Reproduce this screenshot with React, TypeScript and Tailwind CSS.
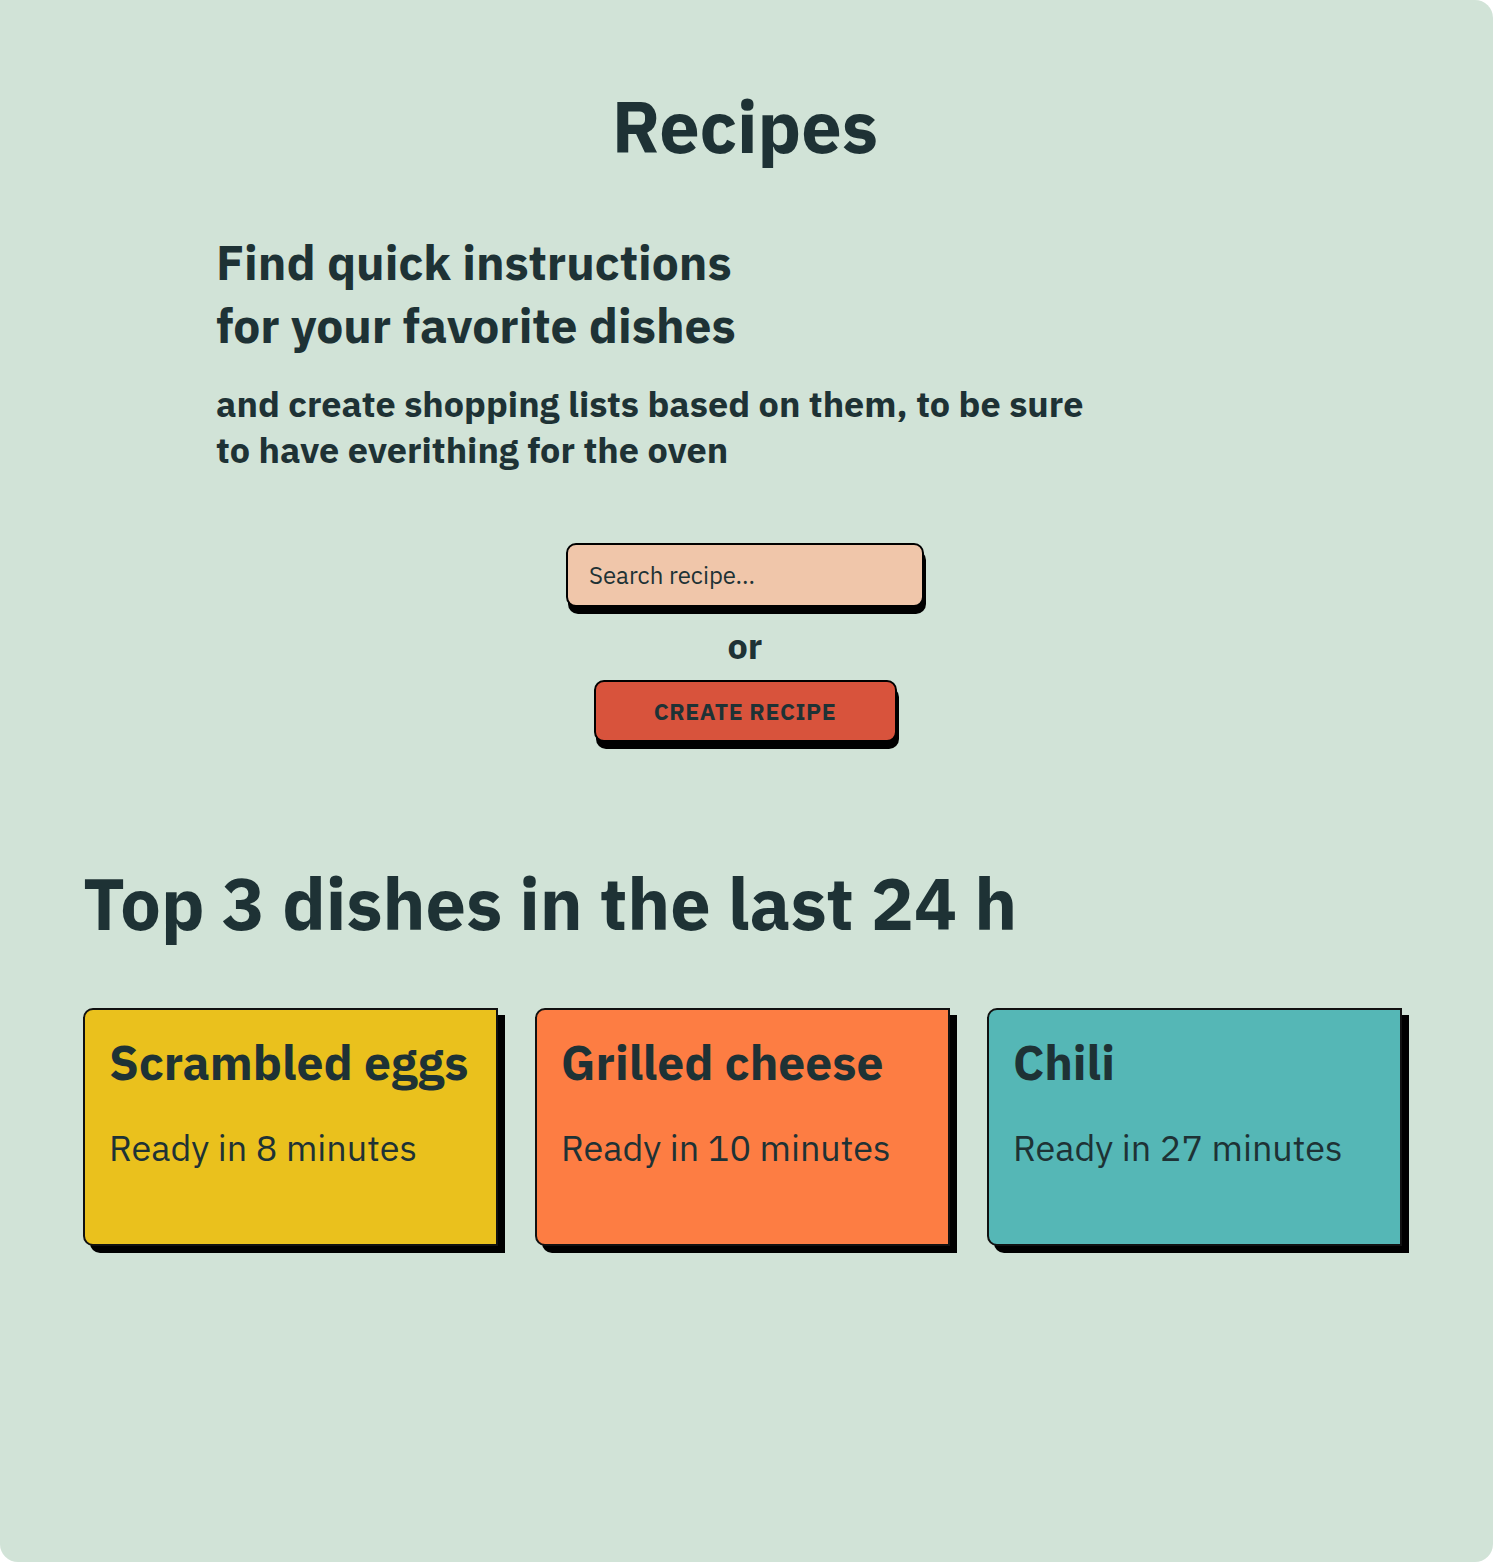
import React from 'react';

interface Dish {
  name: string;
  minutes: number;
  color: string;
}

const dishes: Dish[] = [
  { name: 'Scrambled eggs', minutes: 8, color: 'bg-[#eac11d]' },
  { name: 'Grilled cheese', minutes: 10, color: 'bg-[#fd7d43]' },
  { name: 'Chili', minutes: 27, color: 'bg-[#55b7b6]' },
];

const font = 'font-["IBM_Plex_Sans",Inter,"Noto_Sans",sans-serif]';

export default function App() {
  return (
    <div className={`${font} bg-white`}>
      <div className="w-[1493px] h-[1562px] bg-[#d1e3d7] rounded-tr-[18px] rounded-b-[18px] text-[#1e3235] pl-[83px] pr-[86px] pt-[82px]">
        {/* Title */}
        <h1 className="text-center text-[72px] leading-[88px] font-bold">
          Recipes
        </h1>

        {/* Intro */}
        <div className="pl-[133px] mt-[61px]">
          <h2 className="text-[48px] leading-[63px] font-bold">
            Find quick instructions
            <br />
            for your favorite dishes
          </h2>
          <p className="mt-[24px] text-[36px] leading-[46px] font-bold">
            and create shopping lists based on them, to be sure
            <br />
            to have everithing for the oven
          </p>
        </div>

        {/* Search / create */}
        <div className="flex flex-col items-center mt-[70px]">
          <div className="w-[358px] h-[64px] bg-[#f0c6aa] border-2 border-black rounded-[10px] shadow-[2px_7px_0_#000] flex items-center px-[21px]">
            <input
              placeholder="Search recipe..."
              className="w-full bg-transparent outline-none text-[24px] text-[#1e3235] placeholder:text-[#1e3235]"
            />
          </div>
          <div className="mt-[14px] text-[36px] leading-[50px] font-bold">or</div>
          <button className="mt-[9px] w-[303px] h-[62px] bg-[#d8533c] border-2 border-black rounded-[10px] shadow-[2px_7px_0_#000] text-[23px] font-bold tracking-[0.6px] text-[#1e3235]">
            CREATE RECIPE
          </button>
        </div>

        {/* Top dishes */}
        <h2 className="mt-[116px] text-[72px] leading-[90px] font-bold">
          Top 3 dishes in the last 24 h
        </h2>
        <div className="mt-[60px] flex gap-[37px]">
          {dishes.map((dish) => (
            <div
              key={dish.name}
              className={`${dish.color} w-[415px] h-[238px] border-2 border-[#111] rounded-l-[10px] shadow-[7px_7px_0_#000] pl-[24px] pr-[8px] pt-[22px]`}
            >
              <h3 className="text-[48px] leading-[60px] font-bold whitespace-nowrap">{dish.name}</h3>
              <p className="mt-[33px] text-[36px] leading-[46px] whitespace-nowrap">
                Ready in {dish.minutes} minutes
              </p>
            </div>
          ))}
        </div>
      </div>
    </div>
  );
}
